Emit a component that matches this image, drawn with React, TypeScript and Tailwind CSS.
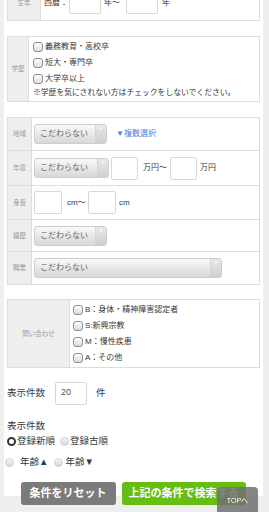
import React from "react"

const Checkbox = () => (
  <span className="inline-block w-[10px] h-[10px] rounded-[3px] border border-[#8f8f8f] bg-linear-to-b from-[#ffffff] to-[#dcdcdc] mr-[2px] shrink-0" />
)

const Radio = ({ on = false, className = "" }: { on?: boolean; className?: string }) =>
  on ? (
    <span className={`inline-block w-[9px] h-[9px] rounded-full border-[2.5px] border-[#333] bg-white shrink-0 ${className}`} />
  ) : (
    <span className={`inline-block w-[9px] h-[9px] rounded-full border border-[#d0d0d0] bg-linear-to-b from-[#f4f4f4] to-[#d8d8d8] shrink-0 ${className}`} />
  )

const Select = ({ className }: { className: string }) => (
  <div
    className={`flex h-[20px] rounded-[3px] border border-[#cdcdcd] bg-linear-to-b from-[#f9f9f9] to-[#d8d8d8] overflow-hidden ${className}`}
  >
    <span className="flex-1 flex items-center pl-[5px] text-[8px] text-[#666]">こだわらない</span>
    <span className="w-[11px] border-l border-[#d4d4d4] bg-linear-to-b from-[#e8e8e8] to-[#cfcfcf] flex justify-center pt-[2px] text-[4px] text-white leading-none">
      ▼
    </span>
  </div>
)

const Box = ({ className }: { className: string }) => (
  <span className={`inline-block rounded-[2px] border border-[#d8d8d8] bg-white ${className}`} />
)

const Label = ({ text, className }: { text: string; className: string }) => (
  <div className={`bg-[#eeeeee] border-r border-[#dddddd] flex items-center justify-center text-[6.5px] text-[#9a9a9a] shrink-0 ${className}`}>
    {text}
  </div>
)

export default function App() {
  return (
    <div className="h-[512px] overflow-hidden bg-[#efefef] font-['Liberation_Sans','Noto_Sans_CJK_JP',sans-serif] text-[#383838]">
      <div className="ml-[4px] w-[259px] h-full bg-white px-[3px]">
        {/* 生年 */}
        <div className="-mt-[16px] flex h-[37px] border border-[#dddddd]">
          <Label text="生年" className="w-[33px]" />
          <div className="flex items-center pl-[3px] text-[8px]">
            <span className="w-[25px]">西暦：</span>
            <Box className="w-[32px] h-[22px]" />
            <span className="ml-[3px] w-[22px]">年～</span>
            <Box className="w-[32px] h-[22px]" />
            <span className="ml-[4px]">年</span>
          </div>
        </div>

        {/* 学歴 */}
        <div className="mt-[15px] flex h-[66px] border border-[#dddddd]">
          <Label text="学歴" className="w-[21px]" />
          <div className="flex flex-col pl-[4px] pt-[2px] text-[8px]">
            <div className="flex items-center h-[16px]"><Checkbox />義務教育・高校卒</div>
            <div className="flex items-center h-[16px]"><Checkbox />短大・専門卒</div>
            <div className="flex items-center h-[16px]"><Checkbox />大学卒以上</div>
            <div className="flex items-center h-[11px] text-[7.8px]">※学歴を気にされない方はチェックをしないでください。</div>
          </div>
        </div>

        {/* 条件 */}
        <div className="mt-[15px] flex flex-col border border-[#dddddd]">
          <div className="flex h-[33px] border-b border-[#dddddd]">
            <Label text="地域" className="w-[24px]" />
            <div className="flex items-center pl-[2px]">
              <Select className="w-[73px]" />
              <span className="ml-[9px] text-[8px] text-[#4a7ed8]">▼複数選択</span>
            </div>
          </div>
          <div className="flex h-[35px] border-b border-[#dddddd]">
            <Label text="年収" className="w-[24px]" />
            <div className="flex items-center pl-[2px] text-[8px]">
              <Select className="w-[75px]" />
              <Box className="ml-[2px] w-[27px] h-[23px]" />
              <span className="ml-[5px] w-[27px]">万円～</span>
              <Box className="w-[27px] h-[23px]" />
              <span className="ml-[3px]">万円</span>
            </div>
          </div>
          <div className="flex h-[34px] border-b border-[#dddddd]">
            <Label text="身長" className="w-[24px]" />
            <div className="flex items-center pl-[2px] text-[8px]">
              <Box className="w-[28px] h-[23px]" />
              <span className="ml-[5px] w-[21px]">cm～</span>
              <Box className="w-[28px] h-[23px]" />
              <span className="ml-[3px]">cm</span>
            </div>
          </div>
          <div className="flex h-[32px] border-b border-[#dddddd]">
            <Label text="婚歴" className="w-[24px]" />
            <div className="flex items-center pl-[2px]">
              <Select className="w-[73px]" />
            </div>
          </div>
          <div className="flex h-[32px]">
            <Label text="職業" className="w-[24px]" />
            <div className="flex items-center pl-[2px]">
              <Select className="w-[188px]" />
            </div>
          </div>
        </div>

        {/* 問い合わせ */}
        <div className="mt-[14px] flex h-[69px] border border-[#dddddd]">
          <Label text="問い合わせ" className="w-[62px]" />
          <div className="flex flex-col pl-[3px] pt-[2px] text-[8px]">
            <div className="flex items-center h-[16px]"><Checkbox />B：身体・精神障害認定者</div>
            <div className="flex items-center h-[16px]"><Checkbox />S:新興宗教</div>
            <div className="flex items-center h-[16px]"><Checkbox />M：慢性疾患</div>
            <div className="flex items-center h-[16px]"><Checkbox />A：その他</div>
          </div>
        </div>

        {/* 表示件数 */}
        <div className="mt-[14px] flex items-center text-[9.5px]">
          <span className="w-[48px]">表示件数</span>
          <span className="w-[32px] h-[23px] rounded-[2px] border border-[#d8d8d8] bg-white pl-[5px] pt-[3px] text-[9px] text-[#555]">20</span>
          <span className="ml-[9px]">件</span>
        </div>

        <div className="mt-[15px] h-[12px] flex items-center text-[9.5px]">表示件数</div>
        <div className="mt-[3px] h-[12px] flex items-center text-[9.5px]">
          <Radio on className="mr-[1px]" />登録新順<Radio className="ml-[5px] mr-[1px]" />登録古順
        </div>
        <div className="mt-[9px] h-[12px] flex items-center text-[9.5px]">
          <Radio className="-ml-[2px] mr-[6px]" />年齢▲
          <Radio className="ml-[6px] mr-[2px]" />年齢▼
        </div>

        <div className="mt-[14px] flex justify-center gap-[6px] pr-[1px]">
          <button className="w-[95px] h-[23px] rounded-[3px] bg-[#7b7b7b] text-white text-[11px] font-bold">
            条件をリセット
          </button>
          <button className="w-[124px] h-[23px] rounded-[3px] bg-[#67bd12] text-white text-[11px] font-bold">
            上記の条件で検索する
          </button>
        </div>
      </div>

      {/* TOPへ */}
      <div className="fixed left-[217px] top-[487px] w-[41px] h-[32px] rounded-[4px] bg-[#707070]/85 text-white text-[7px] flex justify-center pt-[9px]">
        TOPへ
      </div>
    </div>
  )
}
